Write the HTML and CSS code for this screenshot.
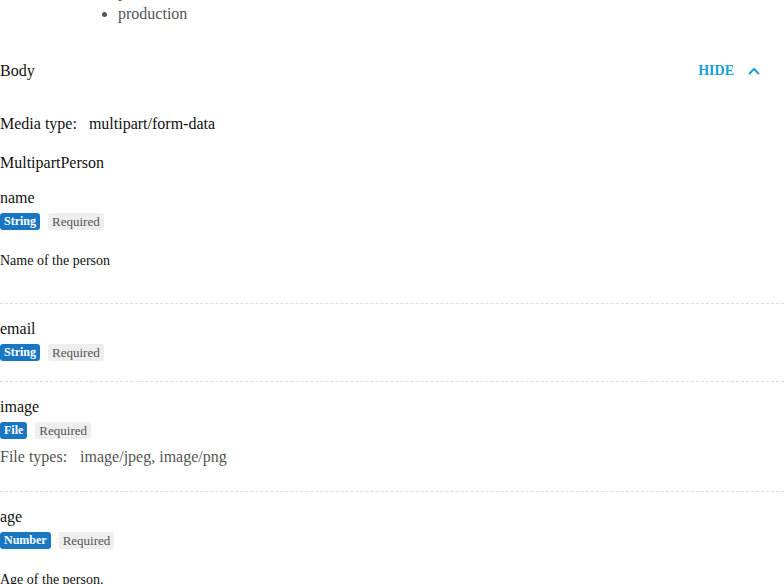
FILE: index.html
```html
<!DOCTYPE html>
<html>
<head>
<meta charset="utf-8">
<link rel="stylesheet" href="styles.css">
</head>
<body>
<ul class="servers">
  <li>preview</li>
  <li>production</li>
</ul>
<div class="section-head">
  <span class="section-title">Body</span>
  <button class="toggle">HIDE
    <svg width="14" height="10" viewBox="0 0 14 10"><path d="M2 8 L7 3 L12 8" fill="none" stroke="currentColor" stroke-width="2"/></svg>
  </button>
</div>
<div class="media"><span class="label">Media type:</span><span>multipart/form-data</span></div>
<div class="schema-name">MultipartPerson</div>

<div class="prop first">
  <div class="prop-name">name</div>
  <div class="badges"><span class="badge type">String</span><span class="badge req">Required</span></div>
  <p class="desc">Name of the person</p>
</div>
<div class="prop">
  <div class="prop-name">email</div>
  <div class="badges"><span class="badge type">String</span><span class="badge req">Required</span></div>
</div>
<div class="prop">
  <div class="prop-name">image</div>
  <div class="badges"><span class="badge type">File</span><span class="badge req">Required</span></div>
  <div class="filetypes"><span class="label">File types:</span><span>image/jpeg, image/png</span></div>
</div>
<div class="prop">
  <div class="prop-name">age</div>
  <div class="badges"><span class="badge type">Number</span><span class="badge req">Required</span></div>
  <p class="desc">Age of the person.</p>
</div>
</body>
</html>
```
FILE: styles.css
```css
html, body {
  margin: 0;
  padding: 0;
  background: #fff;
}
body {
  font-family: "Liberation Serif", "Times New Roman", serif;
  font-size: 16px;
  line-height: 18px;
  color: #111;
  overflow: hidden;
}
.servers {
  margin: -17px 0 0 0;
  padding-left: 118px;
  color: #555;
}
.servers li {
  line-height: 18px;
  margin-bottom: 4px;
}
.servers li:last-child {
  margin-bottom: 0;
}
.section-head {
  display: flex;
  align-items: center;
  justify-content: space-between;
  height: 24px;
  margin-top: 36px;
}
.section-title {
  color: #111;
}
.toggle {
  display: flex;
  align-items: center;
  gap: 13px;
  border: 0;
  background: none;
  padding: 0;
  margin-right: 23px;
  font-family: "Liberation Serif", "Times New Roman", serif;
  font-size: 14px;
  font-weight: bold;
  color: #1a9fdb;
  cursor: pointer;
}
.media {
  margin-top: 32px;
  display: flex;
  gap: 12px;
}
.schema-name {
  margin-top: 21px;
}
.prop {
  border-top: 1px dashed #ddd;
  padding-top: 16px;
  padding-bottom: 20px;
}
.prop.first {
  border-top: 0;
  margin-top: 17px;
  padding-top: 0;
}
.prop-name {
  line-height: 18px;
}
.badges {
  display: flex;
  gap: 8px;
  margin-top: 6px;
}
.badge {
  display: inline-block;
  font-size: 12px;
  line-height: 17px;
  height: 17px;
  padding: 0 4px;
  border-radius: 3px;
}
.badge.type {
  background: #1976c2;
  color: #fff;
  font-weight: bold;
}
.badge.req {
  background: #eee;
  color: #555;
  font-size: 13px;
}
.desc {
  font-size: 14px;
  line-height: 16px;
  margin: 23px 0 14px 0;
}
.filetypes {
  margin-top: 9px;
  margin-bottom: 5px;
  display: flex;
  gap: 13px;
  color: #555;
}
```
